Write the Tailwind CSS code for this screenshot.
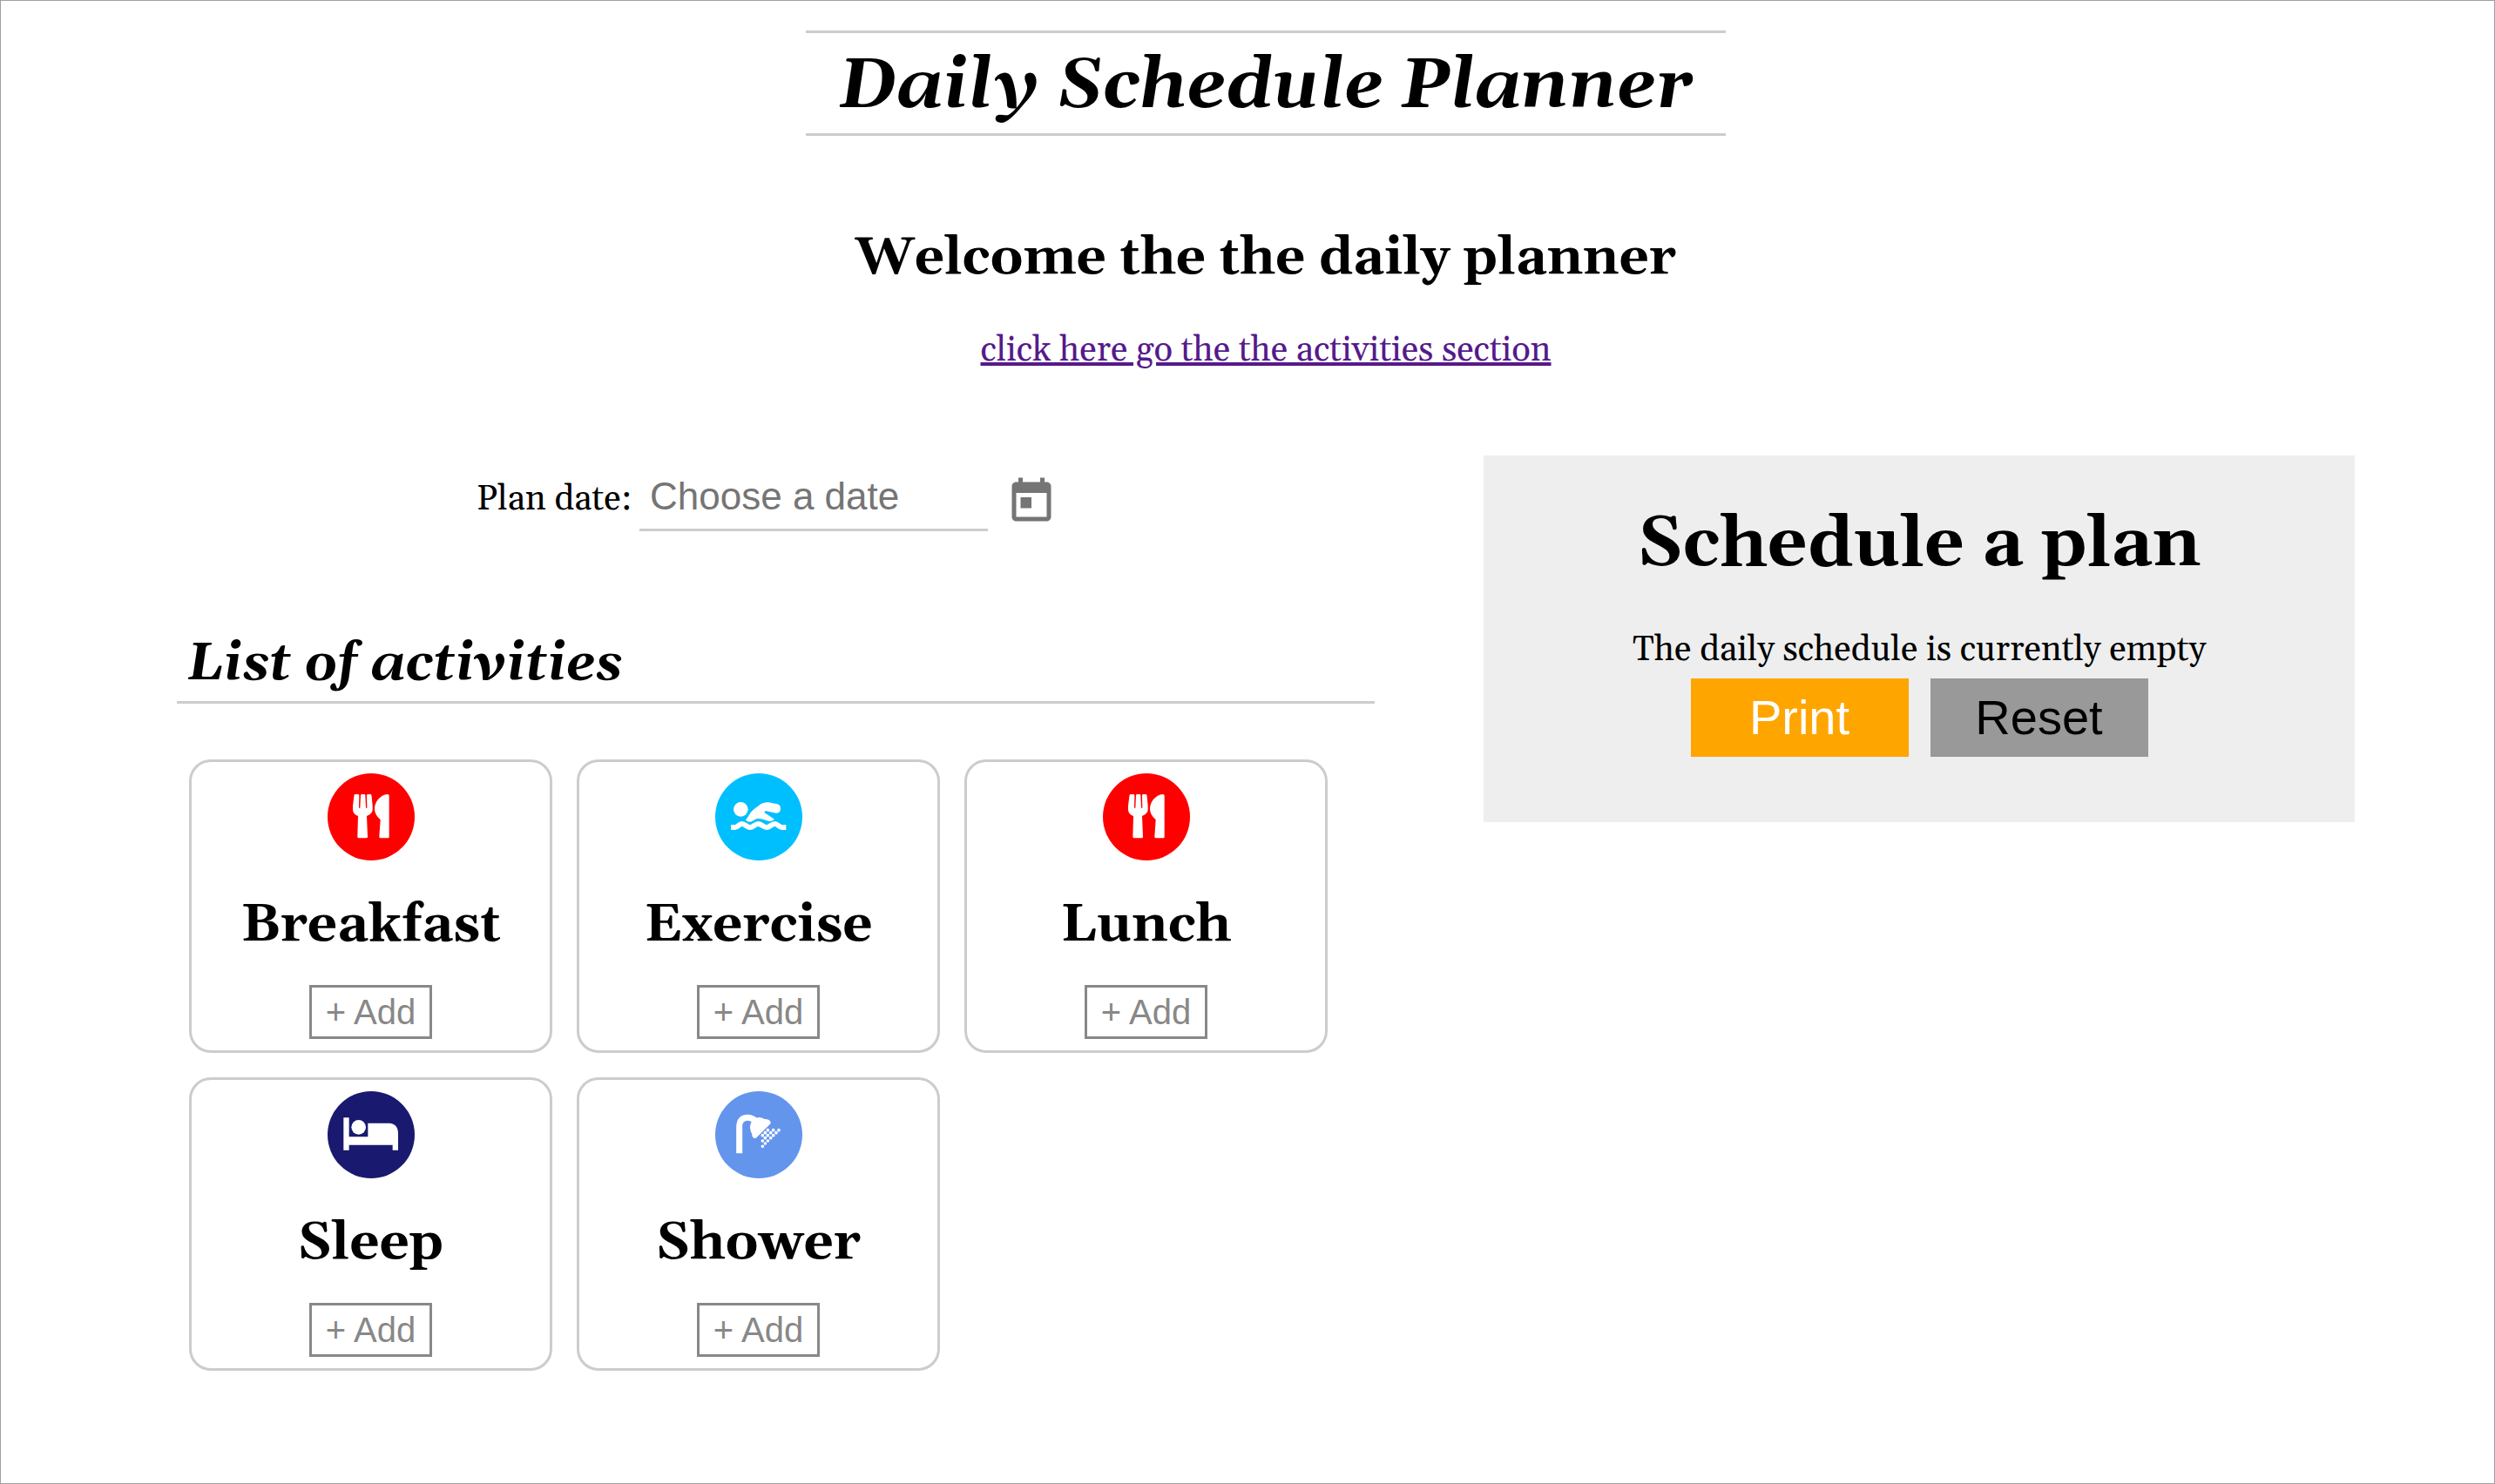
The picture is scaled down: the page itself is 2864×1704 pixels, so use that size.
<!DOCTYPE html>
<html lang="en">
<head>
<meta charset="utf-8">
<meta name="viewport" content="width=device-width, initial-scale=1">
<title>Daily Schedule Planner</title>
<script src="https://cdn.jsdelivr.net/npm/@tailwindcss/browser@4"></script>
</head>
<body class="flex min-h-screen flex-col border border-[#a0a0a0] bg-white pt-[34px] pr-[160px] pb-[100px] pl-[202px] font-['Gelasio','Georgia','Liberation_Serif',serif] text-[40px] leading-[46px] text-black">
  <svg class="hidden" aria-hidden="true">
    <symbol id="meal" viewBox="0 0 300 300">
      <path fill="currentColor" d="M96 72Q92 72 91.500 76L87 112V125Q87 140 105 147L103 218Q103 223 108 223H133Q138 223 138 218L135 147Q155 138 155 125V112L151.500 76Q151 72 147 72H140Q135 72 135 76L136 119H132L130 76Q130 72 126 72H118Q114 72 114 76L112 119H108L109 76Q109 72 105 72Z"/>
      <path fill="currentColor" d="M207 72Q212 72 212 77V219Q212 223 208 223H183Q178 223 178 218L182 160Q162 142 162 122C162 100 180 74 207 72Z"/>
    </symbol>
    <symbol id="swim" viewBox="0 0 300 300">
      <circle cx="88" cy="124" r="25" fill="currentColor"/>
      <path fill="currentColor" d="M105 161C114 150 122 132 133 124L158 105Q170 98 184 100L214 106Q225 109 225 122Q225 136 210 137L173 129L169 135L204 158Q198 164 190 165C176 165 168 156 149 156C134 156 132 167 119 167Q111 167 105 161Z"/>
      <path fill="none" stroke="currentColor" stroke-width="18" d="M54 186H68C78 186 82 174 92 174C102 174 110 186 120 186C130 186 138 174 148 174C158 174 167 186 177 186C187 186 195 174 205 174C215 174 220 186 230 186H244"/>
    </symbol>
    <symbol id="bed" viewBox="0 0 300 300">
      <circle cx="107" cy="124" r="25" fill="currentColor"/>
      <path fill="currentColor" d="M55 91H74V157H139V110H212Q243 112 243 146V203H224V185H74V203H55Z"/>
    </symbol>
    <symbol id="shower" viewBox="0 0 300 300">
      <path fill="none" stroke="currentColor" stroke-width="21" d="M83 214V122C83 99 96 91 112 91Q126 91 138 102"/>
      <path fill="currentColor" d="M130 98Q140 89 152 90Q164 91 170 96Q182 95 188 101Q194 108 189 113L143 159Q137 165 130 159Q125 153 127 148Q121 140 120 126Q120 110 130 98Z"/>
      <path fill="none" stroke="currentColor" stroke-width="11" stroke-linecap="round" d="M181 134h0M200 134h0M219 134h0M172 143h0M191 143h0M210 143h0M163 152h0M181 152h0M200 152h0M172 161h0M191 161h0M163 171h0M181 171h0M172 180h0M163 190h0"/>
    </symbol>
  </svg>

  <header class="flex flex-col items-center text-center">
    <h1 class="border-y-[3px] border-[#ccc] px-[37px] pt-4 pb-2 text-[80px] leading-[91px] font-bold italic">Daily Schedule Planner</h1>
    <h2 class="mt-[107px] text-[60px] leading-[68px] font-bold">Welcome the the daily planner</h2>
    <a href="#activities" class="mt-[49px] text-[#551a8b] underline">click here go the the activities section</a>
  </header>

  <main class="mt-[97px] grid grid-cols-[55fr_40fr] items-start gap-x-[5%]">
    <div>
      <form class="flex items-end justify-center pt-[3px]">
        <div class="flex items-baseline gap-[9px] pb-4">
          <label for="plan-date">Plan date:</label>
          <input id="plan-date" type="text" placeholder="Choose a date" class="w-[400px] border-b-[3px] border-[#ccc] px-3 py-3 font-['Liberation_Sans',Arial,sans-serif] text-[44px] leading-[50px] outline-none placeholder:text-[#757575]">
        </div>
        <button type="button" aria-label="Open calendar" class="flex size-[100px] items-center justify-center text-[#757575]">
          <svg class="size-[60px]" viewBox="0 0 24 24" fill="currentColor" aria-hidden="true"><path d="M19 3h-1V1h-2v2H8V1H6v2H5c-1.110 0-1.990.9-1.990 2L3 19c0 1.100.89 2 2 2h14c1.100 0 2-.9 2-2V5c0-1.100-.9-2-2-2zm0 16H5V8h14v11zM7 10h5v5H7z"/></svg>
        </button>
      </form>

      <section id="activities" class="mt-[103px]">
        <h2 class="border-b-[3px] border-[#ccc] px-3 pb-2 text-[60px] leading-[68px] font-bold italic">List of activities</h2>
        <ul class="mt-16 flex flex-wrap gap-7 pl-[14px]">
          <li class="flex w-[417px] flex-col items-center rounded-[25px] border-[3px] border-[#ccc] py-[13px]">
            <span class="size-[100px] rounded-full bg-[#ff0000] text-white"><svg class="size-full" aria-hidden="true"><use href="#meal"/></svg></span>
            <h3 class="mt-[41px] text-[60px] leading-[68px] font-bold">Breakfast</h3>
            <button type="button" class="mt-[34px] h-[62px] w-[141px] border-[3px] border-[#888] font-['Liberation_Sans',Arial,sans-serif] text-[#888]">+ Add</button>
          </li>
          <li class="flex w-[417px] flex-col items-center rounded-[25px] border-[3px] border-[#ccc] py-[13px]">
            <span class="size-[100px] rounded-full bg-[#00bfff] text-white"><svg class="size-full" aria-hidden="true"><use href="#swim"/></svg></span>
            <h3 class="mt-[41px] text-[60px] leading-[68px] font-bold">Exercise</h3>
            <button type="button" class="mt-[34px] h-[62px] w-[141px] border-[3px] border-[#888] font-['Liberation_Sans',Arial,sans-serif] text-[#888]">+ Add</button>
          </li>
          <li class="flex w-[417px] flex-col items-center rounded-[25px] border-[3px] border-[#ccc] py-[13px]">
            <span class="size-[100px] rounded-full bg-[#ff0000] text-white"><svg class="size-full" aria-hidden="true"><use href="#meal"/></svg></span>
            <h3 class="mt-[41px] text-[60px] leading-[68px] font-bold">Lunch</h3>
            <button type="button" class="mt-[34px] h-[62px] w-[141px] border-[3px] border-[#888] font-['Liberation_Sans',Arial,sans-serif] text-[#888]">+ Add</button>
          </li>
          <li class="flex w-[417px] flex-col items-center rounded-[25px] border-[3px] border-[#ccc] py-[13px]">
            <span class="size-[100px] rounded-full bg-[#191970] text-white"><svg class="size-full" aria-hidden="true"><use href="#bed"/></svg></span>
            <h3 class="mt-[41px] text-[60px] leading-[68px] font-bold">Sleep</h3>
            <button type="button" class="mt-[34px] h-[62px] w-[141px] border-[3px] border-[#888] font-['Liberation_Sans',Arial,sans-serif] text-[#888]">+ Add</button>
          </li>
          <li class="flex w-[417px] flex-col items-center rounded-[25px] border-[3px] border-[#ccc] py-[13px]">
            <span class="size-[100px] rounded-full bg-[#6495ed] text-white"><svg class="size-full" aria-hidden="true"><use href="#shower"/></svg></span>
            <h3 class="mt-[41px] text-[60px] leading-[68px] font-bold">Shower</h3>
            <button type="button" class="mt-[34px] h-[62px] w-[141px] border-[3px] border-[#888] font-['Liberation_Sans',Arial,sans-serif] text-[#888]">+ Add</button>
          </li>
        </ul>
      </section>
    </div>

    <section class="flex flex-col items-center bg-[#eee] pt-[57px] pb-[75px] text-center">
      <h2 class="text-[80px] leading-[91px] font-bold">Schedule a plan</h2>
      <p class="mt-[53px]">The daily schedule is currently empty</p>
      <div class="mt-[9px] flex gap-[25px] font-['Liberation_Sans',Arial,sans-serif] text-[56px] leading-[64px]">
        <button type="button" class="h-[90px] w-[250px] bg-[#ffa500] text-white">Print</button>
        <button type="button" class="h-[90px] w-[250px] bg-[#999]">Reset</button>
      </div>
    </section>
  </main>
</body>
</html>
